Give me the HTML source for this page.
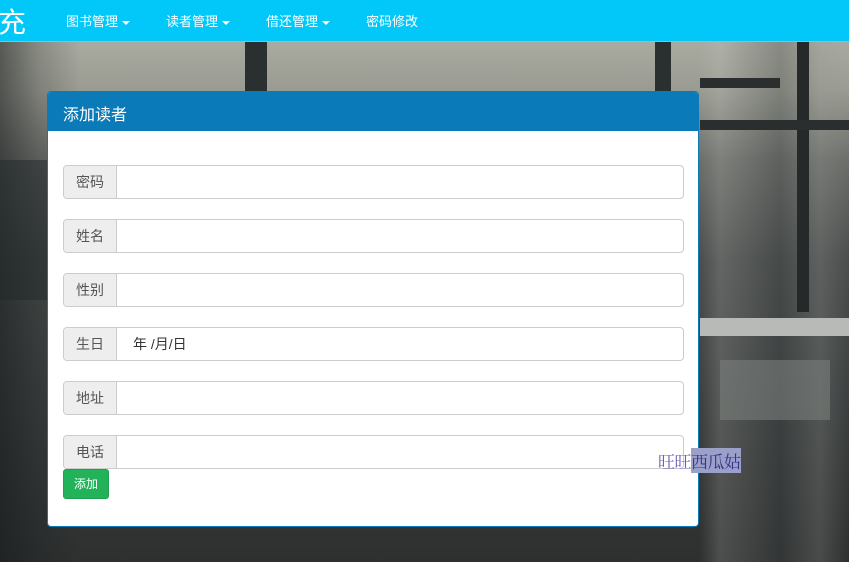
<!DOCTYPE html>
<html><head><meta charset="utf-8"><style>
*{box-sizing:border-box;margin:0;padding:0}
body{width:849px;height:562px;overflow:hidden;position:relative;font-family:"Liberation Sans","Noto Sans CJK SC",sans-serif;font-size:14px;
background:linear-gradient(180deg,#a9aaa0 42px,#9a9b92 90px,#6c6e6a 160px,#4a4d4c 260px,#3c3f3f 400px,#2e3030 562px);}
.bg1{position:absolute;left:0;top:42px;width:849px;height:520px;background:
linear-gradient(90deg,rgba(20,25,25,.55) 0,rgba(20,25,25,.2) 40px,rgba(0,0,0,0) 80px),
linear-gradient(90deg,rgba(0,0,0,0) 700px,rgba(200,200,195,.2) 720px,rgba(60,65,65,.3) 780px,rgba(150,155,150,.25) 820px,rgba(0,0,0,0) 849px);}
.post{position:absolute;background:#2a2f30}
.nav{position:absolute;left:0;top:0;width:849px;height:42px;background:#02c8f9;border-bottom:1px solid #4fd6f5}
.nav .brand{position:absolute;left:-2px;top:1px;font-size:28px;color:#fff}
.nav a{position:absolute;top:11px;color:#fff;font-size:13px}
.caret{display:inline-block;border-top:4px solid #fff;border-left:4px solid transparent;border-right:4px solid transparent;vertical-align:middle;margin-left:4px}
.panel{position:absolute;left:47px;top:91px;width:652px;height:436px;background:#fff;border:1px solid #0a7bb8;border-radius:4px;overflow:hidden}
.ph{height:39px;background:#0a7bb8;color:#fff;font-size:16px;padding:9px 15px}
.grp{position:absolute;left:15px;width:621px;height:34px;display:flex;border:1px solid #ccc;border-radius:4px;overflow:hidden}
.ad{width:53px;background:#eee;border-right:1px solid #ccc;color:#555;font-size:14px;text-align:center;line-height:32px}
.in{flex:1;line-height:32px;padding-left:16px;color:#333}
.btn{position:absolute;left:15px;top:377px;width:46px;height:30px;background:#22b35a;border:1px solid #1f9f51;border-radius:3px;color:#fff;font-size:12px;text-align:center;line-height:28px}
.wm{position:absolute;left:658px;top:448px;font-size:17px;color:#6a5fb8;font-family:"Noto Serif CJK SC",serif;letter-spacing:-0.5px}
.wm span{background:#9aa0c8;color:#3a3090}
</style></head><body>
<div class="bg1"></div>
<div class="post" style="left:245px;top:42px;width:22px;height:60px"></div>
<div class="post" style="left:655px;top:42px;width:16px;height:60px"></div>
<div class="post" style="left:797px;top:42px;width:12px;height:270px;background:#25292a"></div>
<div class="post" style="left:700px;top:78px;width:80px;height:10px;background:#2a2e2f"></div>
<div class="post" style="left:700px;top:120px;width:149px;height:10px;background:#2a2e2f"></div>
<div class="post" style="left:700px;top:318px;width:149px;height:18px;background:#b8bab7"></div>
<div class="post" style="left:720px;top:360px;width:110px;height:60px;background:#7a7e7c;opacity:.6"></div>
<div class="post" style="left:0;top:160px;width:47px;height:140px;background:#22282a;opacity:.5"></div>
<div class="nav"><span class="brand">充</span>
<a style="left:66px">图书管理<span class="caret"></span></a>
<a style="left:166px">读者管理<span class="caret"></span></a>
<a style="left:266px">借还管理<span class="caret"></span></a>
<a style="left:366px">密码修改</a></div>
<div class="panel"><div class="ph">添加读者</div>
<div class="grp" style="top:73px"><div class="ad">密码</div><div class="in"></div></div>
<div class="grp" style="top:127px"><div class="ad">姓名</div><div class="in"></div></div>
<div class="grp" style="top:181px"><div class="ad">性别</div><div class="in"></div></div>
<div class="grp" style="top:235px"><div class="ad">生日</div><div class="in">年 /月/日</div></div>
<div class="grp" style="top:289px"><div class="ad">地址</div><div class="in"></div></div>
<div class="grp" style="top:343px"><div class="ad">电话</div><div class="in"></div></div>
<div class="btn">添加</div>
</div>
<div class="wm">旺旺<span>西瓜姑</span></div>
</body></html>
